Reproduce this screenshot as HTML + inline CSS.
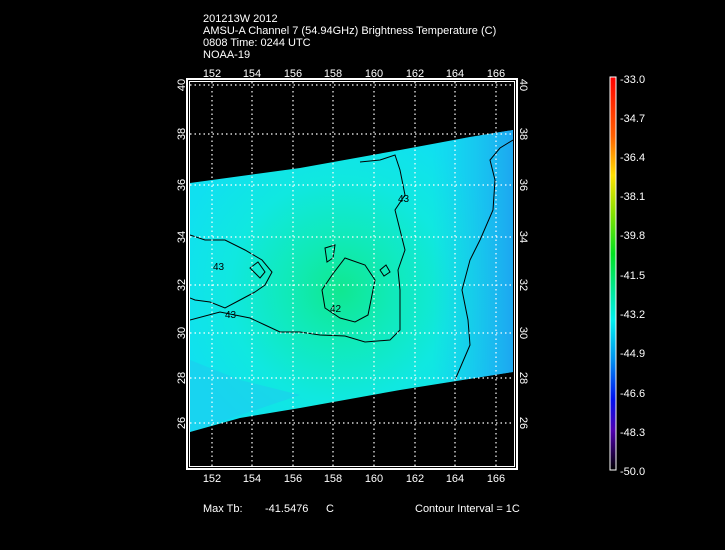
<!DOCTYPE html>
<html><head><style>
html,body{margin:0;padding:0;background:#000;}
svg{display:block;font-family:"Liberation Sans",sans-serif;}
text{fill:#fff;font-size:11px;}
</style></head><body>
<svg width="725" height="550" viewBox="0 0 725 550">
<defs>
<linearGradient id="cb" x1="0" y1="0" x2="0" y2="1">
<stop offset="0" stop-color="#ff0000"/>
<stop offset="0.15" stop-color="#ff6000"/>
<stop offset="0.25" stop-color="#ffe000"/>
<stop offset="0.35" stop-color="#80e000"/>
<stop offset="0.45" stop-color="#00e020"/>
<stop offset="0.55" stop-color="#00e8a0"/>
<stop offset="0.62" stop-color="#00f0f0"/>
<stop offset="0.72" stop-color="#0090f0"/>
<stop offset="0.82" stop-color="#0010f0"/>
<stop offset="0.9" stop-color="#5000b0"/>
<stop offset="1" stop-color="#000000"/>
</linearGradient>
<radialGradient id="g1" cx="340" cy="290" r="170" gradientUnits="userSpaceOnUse">
<stop offset="0" stop-color="#10e890"/>
<stop offset="0.3" stop-color="#10eab8"/>
<stop offset="0.65" stop-color="#10e8e0"/>
<stop offset="1" stop-color="#10e0f0"/>
</radialGradient>
<linearGradient id="g2" x1="0" y1="0" x2="1" y2="0">
<stop offset="0" stop-color="#20c0f0" stop-opacity="0"/>
<stop offset="0.75" stop-color="#20b8f0" stop-opacity="0"/>
<stop offset="1" stop-color="#2098f0" stop-opacity="0.8"/>
</linearGradient>
<clipPath id="pc"><rect x="190" y="82" width="323" height="384"/></clipPath>
</defs>
<text x="203" y="22">201213W 2012</text>
<text x="203" y="34">AMSU-A Channel 7 (54.94GHz) Brightness Temperature (C)</text>
<text x="203" y="46">0808 Time: 0244 UTC</text>
<text x="203" y="58">NOAA-19</text>

<rect x="187" y="79" width="330" height="390" fill="none" stroke="#fff" stroke-width="2"/>
<rect x="189.5" y="81.5" width="325" height="385" fill="#000" stroke="#fff" stroke-width="1"/>
<g clip-path="url(#pc)">
<polygon points="190,183 300,168 400,150 470,137 513,130 513,372 450,382 400,390 300,408 240,418 190,432" fill="url(#g1)"/>
<polygon points="190,183 300,168 400,150 470,137 513,130 513,372 450,382 400,390 300,408 240,418 190,432" fill="url(#g2)"/>
<polygon points="190,360 240,380 300,395 190,432" fill="#20c8f0" opacity="0.5"/>
<g fill="none" stroke="#000" stroke-width="1">
<path d="M190,235 L205,240 L225,240 L245,250 L262,260 L272,272 L265,285 L255,292 L240,300 L225,308 L210,302 L195,300 L190,298"/>
<path d="M190,320 L220,312 L250,318 L265,325 L280,332 L300,332 L320,335 L345,336 L365,342 L390,340 L400,330 L400,310 L400,290 L398,270 L405,250 L400,230 L395,210 L405,195 L400,170 L395,155 L380,160 L360,162"/>
<path d="M345,258 L365,265 L375,280 L372,295 L368,315 L355,322 L340,318 L325,308 L322,290 L332,275 Z"/>
<path d="M325,248 L335,245 L333,258 L327,262 Z"/>
<path d="M380,270 L386,265 L390,272 L384,276 Z"/>
<path d="M258,262 L265,272 L260,278 L250,268 Z"/>
<path d="M513,140 L500,148 L490,160 L495,180 L493,210 L480,240 L470,260 L462,290 L468,320 L470,345 L455,380"/>
</g>
<text x="398" y="202" style="fill:#000;font-size:10px">43</text>
<text x="213" y="270" style="fill:#000;font-size:10px">43</text>
<text x="225" y="318" style="fill:#000;font-size:10px">43</text>
<text x="330" y="312" style="fill:#000;font-size:10px">42</text>
<g stroke="#fff" stroke-width="1.2" stroke-dasharray="1.5,3">
<line x1="212" y1="82" x2="212" y2="466"/><line x1="252" y1="82" x2="252" y2="466"/>
<line x1="293" y1="82" x2="293" y2="466"/><line x1="333" y1="82" x2="333" y2="466"/>
<line x1="374" y1="82" x2="374" y2="466"/><line x1="415" y1="82" x2="415" y2="466"/>
<line x1="455" y1="82" x2="455" y2="466"/><line x1="496" y1="82" x2="496" y2="466"/>
<line x1="190" y1="85" x2="513" y2="85"/><line x1="190" y1="134" x2="513" y2="134"/>
<line x1="190" y1="185" x2="513" y2="185"/><line x1="190" y1="237" x2="513" y2="237"/>
<line x1="190" y1="285" x2="513" y2="285"/><line x1="190" y1="333" x2="513" y2="333"/>
<line x1="190" y1="378" x2="513" y2="378"/><line x1="190" y1="423" x2="513" y2="423"/>
</g>
</g>
<g text-anchor="middle">
<text x="212" y="77">152</text><text x="252" y="77">154</text><text x="293" y="77">156</text><text x="333" y="77">158</text>
<text x="374" y="77">160</text><text x="415" y="77">162</text><text x="455" y="77">164</text><text x="496" y="77">166</text>
<text x="212" y="482">152</text><text x="252" y="482">154</text><text x="293" y="482">156</text><text x="333" y="482">158</text>
<text x="374" y="482">160</text><text x="415" y="482">162</text><text x="455" y="482">164</text><text x="496" y="482">166</text>
</g>
<g text-anchor="middle">
<text transform="translate(185,85) rotate(-90)">40</text>
<text transform="translate(185,134) rotate(-90)">38</text>
<text transform="translate(185,185) rotate(-90)">36</text>
<text transform="translate(185,237) rotate(-90)">34</text>
<text transform="translate(185,285) rotate(-90)">32</text>
<text transform="translate(185,333) rotate(-90)">30</text>
<text transform="translate(185,378) rotate(-90)">28</text>
<text transform="translate(185,423) rotate(-90)">26</text>
<text transform="translate(520,85) rotate(90)">40</text>
<text transform="translate(520,134) rotate(90)">38</text>
<text transform="translate(520,185) rotate(90)">36</text>
<text transform="translate(520,237) rotate(90)">34</text>
<text transform="translate(520,285) rotate(90)">32</text>
<text transform="translate(520,333) rotate(90)">30</text>
<text transform="translate(520,378) rotate(90)">28</text>
<text transform="translate(520,423) rotate(90)">26</text>
</g>

<rect x="610" y="77" width="6" height="393" fill="url(#cb)" stroke="#fff" stroke-width="1"/>
<text x="620" y="83">-33.0</text>
<text x="620" y="122">-34.7</text>
<text x="620" y="161">-36.4</text>
<text x="620" y="200">-38.1</text>
<text x="620" y="239">-39.8</text>
<text x="620" y="279">-41.5</text>
<text x="620" y="318">-43.2</text>
<text x="620" y="357">-44.9</text>
<text x="620" y="397">-46.6</text>
<text x="620" y="436">-48.3</text>
<text x="620" y="475">-50.0</text>

<text x="203" y="512">Max Tb:</text>
<text x="265" y="512">-41.5476</text>
<text x="326" y="512">C</text>
<text x="415" y="512">Contour Interval = 1C</text>
</svg>
</body></html>
